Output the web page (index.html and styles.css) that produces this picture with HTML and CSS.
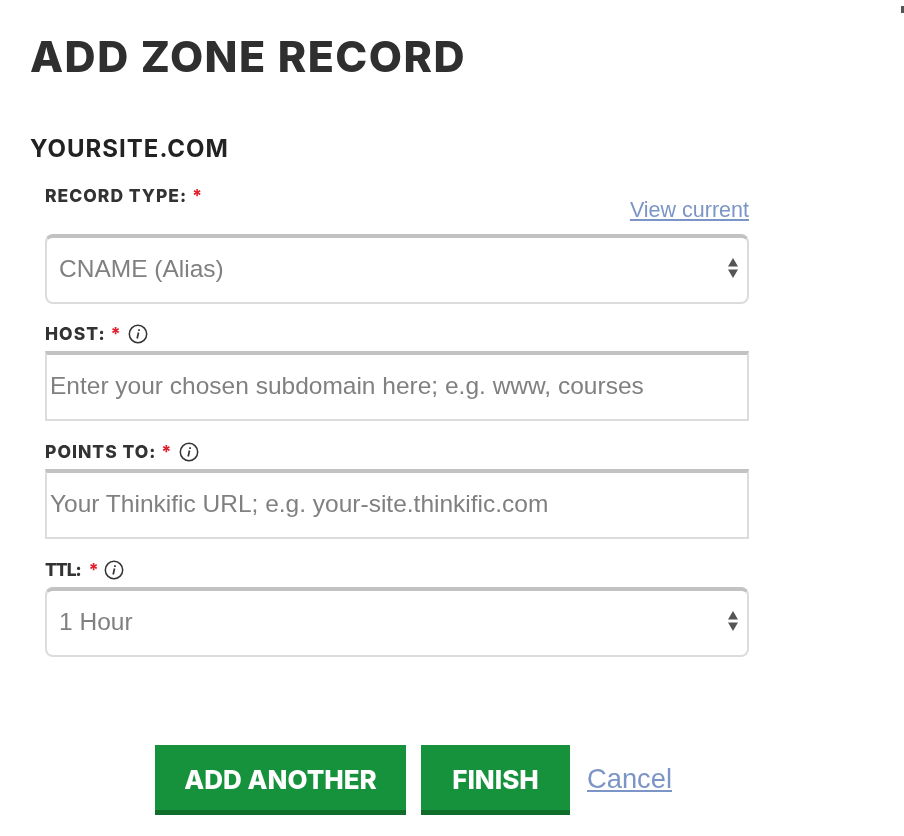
FILE: index.html
```html
<!DOCTYPE html>
<html lang="en">
<head>
    <meta charset="UTF-8">
    <meta name="viewport" content="width=device-width, initial-scale=1.0">
    <title>Add Zone Record</title>
    <link rel="stylesheet" href="styles.css">
</head>
<body>
    <span class="corner-mark"></span>
    <h1>ADD ZONE RECORD</h1>
    <h2>YOURSITE.COM</h2>
    <form class="record-form">
        <div class="field-top">
            <label for="recordType">RECORD TYPE: <span class="req">*</span></label>
            <a href="#" class="view-link">View current</a>
        </div>
        <div class="select-wrap">
            <select id="recordType">
                <option>CNAME (Alias)</option>
            </select>
            <svg class="arrows" width="12" height="22" viewBox="0 0 12 22"><path d="M6 1 L11 9.500 L1 9.500 Z M1 12.500 L11 12.500 L6 21 Z" fill="#555"/></svg>
        </div>

        <div class="field-label">
            <label for="host">HOST: <span class="req">*</span></label>
            <svg class="info" width="20" height="20" viewBox="0 0 20 20"><circle cx="10" cy="10" r="8.700" fill="none" stroke="#333" stroke-width="1.500"/><path d="M11 5.200v1.800M10.500 8.500L9.200 14.500" stroke="#333" stroke-width="1.700" fill="none"/></svg>
        </div>
        <input type="text" id="host" placeholder="Enter your chosen subdomain here; e.g. www, courses">

        <div class="field-label">
            <label for="pointsTo">POINTS TO: <span class="req">*</span></label>
            <svg class="info" width="20" height="20" viewBox="0 0 20 20"><circle cx="10" cy="10" r="8.700" fill="none" stroke="#333" stroke-width="1.500"/><path d="M11 5.200v1.800M10.500 8.500L9.200 14.500" stroke="#333" stroke-width="1.700" fill="none"/></svg>
        </div>
        <input type="text" id="pointsTo" placeholder="Your Thinkific URL; e.g. your-site.thinkific.com">

        <div class="field-label">
            <label for="ttl" class="label-tight">TTL: <span class="req">*</span></label>
            <svg class="info" width="20" height="20" viewBox="0 0 20 20"><circle cx="10" cy="10" r="8.700" fill="none" stroke="#333" stroke-width="1.500"/><path d="M11 5.200v1.800M10.500 8.500L9.200 14.500" stroke="#333" stroke-width="1.700" fill="none"/></svg>
        </div>
        <div class="select-wrap">
            <select id="ttl">
                <option>1 Hour</option>
            </select>
            <svg class="arrows" width="12" height="22" viewBox="0 0 12 22"><path d="M6 1 L11 9.500 L1 9.500 Z M1 12.500 L11 12.500 L6 21 Z" fill="#555"/></svg>
        </div>

        <div class="actions">
            <button type="button" class="btn btn-another">ADD ANOTHER</button>
            <button type="submit" class="btn btn-finish">FINISH</button>
            <a href="#" class="cancel-link">Cancel</a>
        </div>
    </form>
</body>
</html>
```

FILE: styles.css
```css
html {
    background-color: #ffffff;
}
body {
    font-family: "Liberation Sans", Arial, sans-serif;
    margin: 0;
    padding: 35px 0 0 30px;
    height: 801px;
    overflow: hidden;
    position: relative;
    background-color: #ffffff;
    filter: blur(0.4px);
}
.corner-mark {
    position: absolute;
    top: 6px;
    right: 0;
    width: 3px;
    height: 7px;
    background-color: #555555;
}
h1 {
    font-family: Inter, sans-serif;
    font-weight: 800;
    font-size: 43px;
    line-height: 42px;
    letter-spacing: 1.500px;
    margin: 0;
    color: #2f2f2f;
}
h2 {
    font-family: Inter, sans-serif;
    font-weight: 700;
    font-size: 24px;
    line-height: 28px;
    letter-spacing: 1px;
    margin: 58px 0 0 0;
    color: #222222;
}
.record-form {
    width: 704px;
    margin-left: 15px;
}
label {
    font-family: Inter, sans-serif;
    font-weight: 800;
    font-size: 17.500px;
    line-height: 20px;
    letter-spacing: 1px;
    color: #333333;
}
.label-tight {
    letter-spacing: -1px;
}
.label-tight .req {
    margin-left: 5px;
}
.req {
    color: #e0202c;
}
.field-top {
    display: flex;
    justify-content: space-between;
    height: 71px;
    padding-top: 23px;
    box-sizing: border-box;
}
.view-link {
    align-self: flex-end;
    margin-bottom: 12px;
    font-size: 21.500px;
    line-height: 24px;
    color: #7b95c6;
}
.field-label {
    display: flex;
    align-items: center;
    gap: 6px;
    height: 48px;
    padding-top: 14px;
    box-sizing: border-box;
}
.field-top + .select-wrap {
    margin-bottom: -1px;
}
.info {
    flex: none;
}
.select-wrap {
    position: relative;
}
select, input {
    display: block;
    width: 100%;
    height: 70px;
    box-sizing: border-box;
    font-family: "Liberation Sans", Arial, sans-serif;
    font-size: 24.500px;
    color: #808080;
    background-color: #ffffff;
    border: 2px solid #dcdcdc;
    border-top: 4px solid #c2c2c2;
    outline: none;
}
select {
    appearance: none;
    -webkit-appearance: none;
    border-radius: 8px;
    padding: 0 12px 4px;
}
input {
    border-radius: 0;
    padding: 0 3px 2px;
}
input::placeholder {
    color: #808080;
    opacity: 1;
}
.arrows {
    position: absolute;
    right: 10px;
    top: 23px;
}
.actions {
    display: flex;
    align-items: center;
    gap: 15px;
    margin-top: 88px;
    padding-left: 110px;
}
.btn {
    height: 70px;
    border: none;
    border-bottom: 5px solid #0f6e2a;
    background-color: #16913c;
    color: #ffffff;
    font-family: Inter, sans-serif;
    font-weight: 800;
    font-size: 26px;
    padding: 4px 0 0;
}
.btn-another {
    width: 251px;
}
.btn-finish {
    width: 149px;
}
.cancel-link {
    font-size: 27.300px;
    color: #7b95c6;
    margin-left: 2px;
    margin-bottom: 3px;
}
```
